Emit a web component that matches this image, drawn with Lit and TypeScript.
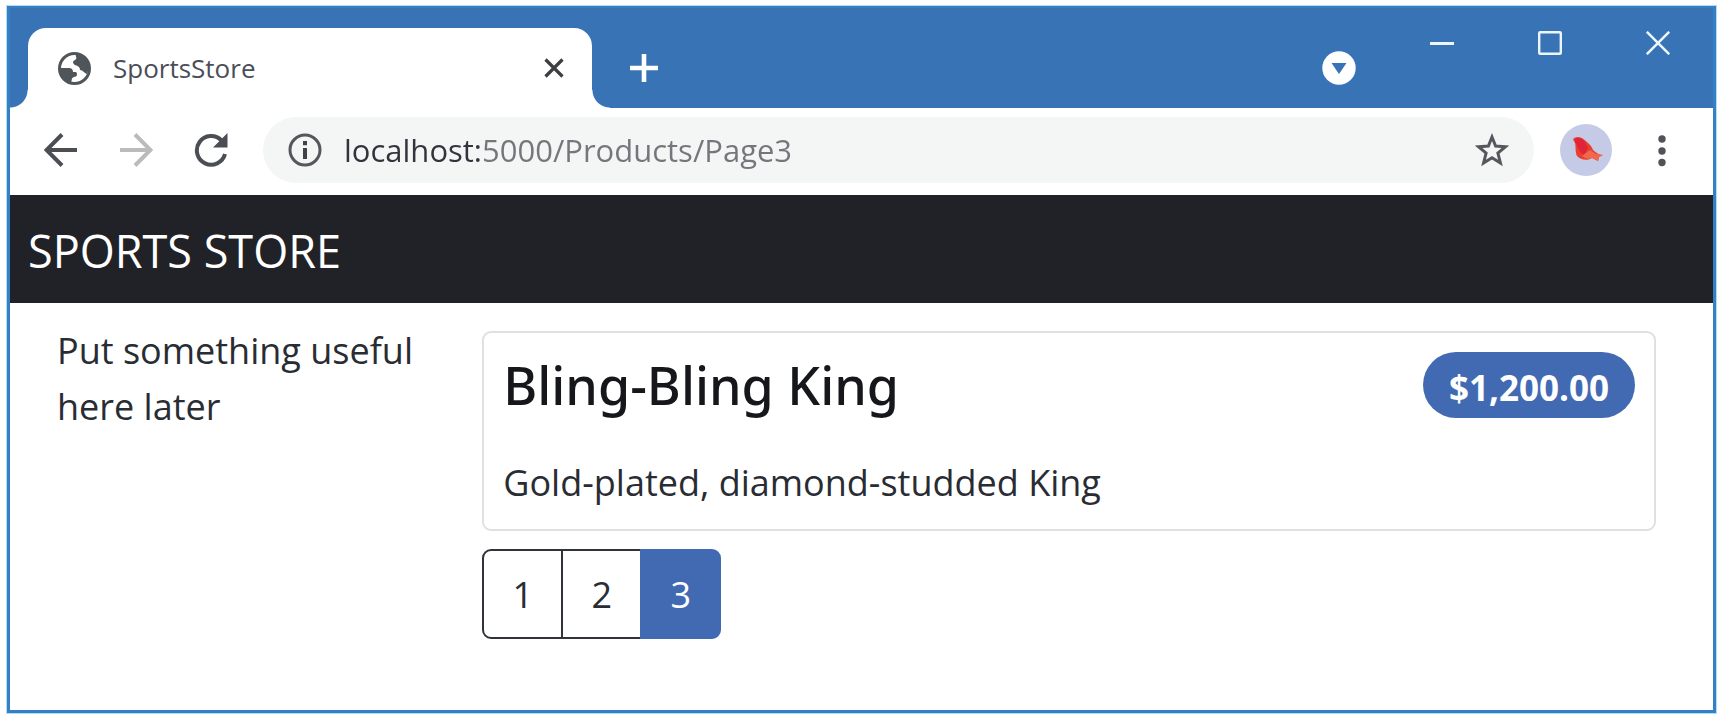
import { LitElement, html, css, svg } from "lit";
import { customElement, state } from "lit/decorators.js";

interface Product {
  name: string;
  description: string;
  price: number;
}

const money = new Intl.NumberFormat("en-US", { style: "currency", currency: "USD" });

const icons = {
  globe: svg`<svg viewBox="0 0 33 33" width="33" height="33" aria-hidden="true">
    <circle cx="16.5" cy="16.5" r="15" fill="#fff" stroke="#50555a" stroke-width="3"/>
    <path fill="#50555a" d="M18 2 C17 5 20 6 17 8 C14 9 15 12 17 13 C20 14 22 15 22 18 C25 18 26 21 29 22 C33 14 29 3 18 2Z"/>
    <path fill="#50555a" d="M2 16 H11 C14 16 15 18 15 20 H18 C20 22 19 25 16 25 C13 26 14 29 13 31 C6 29 2 24 2 16Z"/>
  </svg>`,
  tabClose: svg`<svg viewBox="0 0 20 20" width="20" height="20" aria-hidden="true">
    <path d="M1.500 1.500 18.500 18.500M18.500 1.500 1.500 18.500" stroke="#3c4043" stroke-width="3.200"/></svg>`,
  plus: svg`<svg viewBox="0 0 28 28" width="28" height="28" aria-hidden="true">
    <path d="M14 0V28M0 14H28" stroke="#fff" stroke-width="4.600"/></svg>`,
  drop: svg`<svg viewBox="0 0 34 34" width="34" height="34" aria-hidden="true">
    <circle cx="17" cy="17" r="16.700" fill="#fff"/><path d="M9.500 12H24.500L17 23Z" fill="#3873b6"/></svg>`,
  minimize: svg`<svg viewBox="0 0 24 24" width="24" height="24" aria-hidden="true">
    <path d="M0 12.500H24" stroke="#eef6fd" stroke-width="3"/></svg>`,
  maximize: svg`<svg viewBox="0 0 24 24" width="24" height="24" aria-hidden="true">
    <rect x="1.200" y="1.200" width="21.600" height="21.600" rx="1" fill="none" stroke="#eef6fd" stroke-width="2.400"/></svg>`,
  close: svg`<svg viewBox="0 0 24 24" width="24" height="24" aria-hidden="true">
    <path d="M.8.8 23.200 23.200M23.200.8.8 23.200" stroke="#eef6fd" stroke-width="2.500"/></svg>`,
  back: svg`<svg viewBox="0 0 34 34" width="34" height="34" aria-hidden="true">
    <path d="M33 17H3.500M18 1.500 2.500 17 18 32.500" fill="none" stroke="#4b4f54" stroke-width="4"/></svg>`,
  forward: svg`<svg viewBox="0 0 34 34" width="34" height="34" aria-hidden="true">
    <path d="M1 17H30.500M16 1.500 31.500 17 16 32.500" fill="none" stroke="#b9bbbd" stroke-width="4"/></svg>`,
  reload: svg`<svg viewBox="0 0 34 34" width="34" height="34" aria-hidden="true">
    <path d="M27.500 7.500A14.300 14.300 0 1 0 31 21" fill="none" stroke="#4b4f54" stroke-width="4"/>
    <path d="M33.500 0V14.500H19Z" fill="#4b4f54"/></svg>`,
  info: svg`<svg viewBox="0 0 34 34" width="34" height="34" aria-hidden="true">
    <circle cx="17" cy="17" r="15" fill="none" stroke="#54585c" stroke-width="3"/>
    <path d="M17 8V12.200M17 15V26" stroke="#3f4347" stroke-width="4"/></svg>`,
  star: svg`<svg viewBox="0 0 34 34" width="34" height="34" aria-hidden="true">
    <path d="M17 4 20.600 13 30.500 13.700 22.900 20 25.400 30 17 24.700 8.600 30 11.100 20 3.500 13.700 13.400 13Z" fill="none" stroke="#54585c" stroke-width="3"/></svg>`,
  bird: svg`<svg viewBox="0 0 52 52" width="52" height="52" aria-hidden="true">
    <circle cx="26" cy="26" r="26" fill="#c5cbe7"/>
    <path d="M13 15.500C14 12 21 12 24 15.500C28 19 32 22 33 26C36 29 40 31 43 31L39 33L38 37L32 34C28 37 20 36 17 32C15 28 16 22 15 19Z" fill="#e8402f"/>
    <path d="M15 15C18 13 22 14 25 18L28 24L24 31C18 28 18 21 15 18Z" fill="#e0243a"/>
    <path d="M22 32L30 26L36 30L43 31L39 33L38 37L32 34Q27 36 22 32Z" fill="#f0684e"/></svg>`,
  dots: svg`<svg viewBox="0 0 10 34" width="10" height="34" aria-hidden="true">
    <g fill="#505357"><circle cx="5" cy="6" r="3.700"/><circle cx="5" cy="18" r="3.700"/><circle cx="5" cy="29.500" r="3.700"/></g></svg>`,
};

@customElement("browser-chrome")
export class BrowserChrome extends LitElement {
  static styles = css`
    :host { display: block; font-family: "Open Sans", "Noto Sans", sans-serif; }
    button {
      display: flex; padding: 0; border: 0; background: none; color: inherit; flex: none;
    }
    svg { display: block; }
    .strip { display: flex; background: #3873b6; height: 100px; }
    .curve { flex: none; align-self: flex-end; width: 18px; height: 18px; }
    .curve-start { background: radial-gradient(circle at 0 0, transparent 17px, #fff 18px); }
    .curve-end { background: radial-gradient(circle at 100% 0, transparent 17px, #fff 18px); }
    .tab {
      display: flex; align-items: center; gap: 22px; flex: 0 1 564px; min-width: 0;
      box-sizing: border-box; margin-top: 20px; padding: 0 28px 0 30px;
      background: #fff; border-radius: 18px 18px 0 0;
    }
    .tab-title { flex: 1; font-size: 26px; line-height: 36px; color: #4a4e58; }
    .new-tab { align-self: center; margin: 20px 0 0 20px; }
    .actions { display: flex; margin-left: auto; padding-right: 43px; }
    .search-tabs { align-self: center; margin: 20px 74px 0 0; }
    .window-buttons { display: flex; gap: 84px; padding-top: 23px; }
    .toolbar {
      display: flex; align-items: center; box-sizing: border-box;
      height: 87px; padding: 0 46px 3px 34px; background: #fff;
    }
    .nav { display: flex; gap: 41px; margin-right: 35px; }
    .address {
      display: flex; align-items: center; flex: 1; min-width: 0; gap: 22px;
      height: 66px; box-sizing: border-box; padding: 0 25px; border-radius: 33px; background: #f4f5f5;
    }
    .url {
      flex: 1; min-width: 0; padding: 0; border: 0; outline: 0; height: 48px;
      font: 31px/48px "Open Sans", "Noto Sans", sans-serif;
      color: transparent;
      background: linear-gradient(90deg, #30343c 136px, #73767b 136px);
      -webkit-background-clip: text; background-clip: text;
    }
    .avatar { margin: 0 45px 0 26px; }
  `;

  render() {
    return html`
      <div class="strip">
        <span class="curve curve-start"></span>
        <div class="tab">
          ${icons.globe}
          <span class="tab-title">SportsStore</span>
          <button aria-label="Close tab">${icons.tabClose}</button>
        </div>
        <span class="curve curve-end"></span>
        <button class="new-tab" aria-label="New tab">${icons.plus}</button>
        <div class="actions">
          <button class="search-tabs" aria-label="Search tabs">${icons.drop}</button>
          <div class="window-buttons">
            <button aria-label="Minimize">${icons.minimize}</button>
            <button aria-label="Maximize">${icons.maximize}</button>
            <button aria-label="Close">${icons.close}</button>
          </div>
        </div>
      </div>
      <div class="toolbar">
        <div class="nav">
          <button aria-label="Back">${icons.back}</button>
          <button aria-label="Forward">${icons.forward}</button>
          <button aria-label="Reload">${icons.reload}</button>
        </div>
        <div class="address">
          <button aria-label="Site information">${icons.info}</button>
          <input class="url" type="text" aria-label="Address" value="localhost:5000/Products/Page3" />
          <button aria-label="Bookmark this page">${icons.star}</button>
        </div>
        <button class="avatar" aria-label="Profile">${icons.bird}</button>
        <button aria-label="Menu">${icons.dots}</button>
      </div>
    `;
  }
}

@customElement("product-card")
export class ProductCard extends LitElement {
  static properties = { product: { attribute: false } };
  declare product: Product;

  static styles = css`
    :host {
      display: block; box-sizing: border-box; padding: 19px 19px 18px;
      border: 2px solid #e0e0e0; border-radius: 9px;
    }
    .head { display: flex; justify-content: space-between; align-items: flex-start; }
    .name {
      margin: 0; font-family: "Noto Sans", "Open Sans", sans-serif;
      font-size: 52px; line-height: 66px; font-weight: 500; color: #15171b;
    }
    .price {
      padding: 6px 26px 0; border-radius: 33px; background: #426ab3; color: #fff;
      font-size: 35px; line-height: 60px; font-weight: 700;
    }
    .description { margin: 0; padding: 37px 0 0; font-size: 36px; line-height: 56px; }
  `;

  render() {
    return html`
      <div class="head">
        <h4 class="name">${this.product.name}</h4>
        <span class="price">${money.format(this.product.price)}</span>
      </div>
      <p class="description">${this.product.description}</p>
    `;
  }
}

@customElement("app-root")
export class AppRoot extends LitElement {
  @state() private products: Product[] = [
    { name: "Bling-Bling King", description: "Gold-plated, diamond-studded King", price: 1200 },
  ];
  @state() private pages = [1, 2, 3];
  @state() private current = 3;

  static styles = css`
    :host {
      display: flex; box-sizing: border-box; min-height: 100vh; padding: 6px 6px 6px 7px;
      background: #fff; color: #292d33;
      font-family: "Open Sans", "Noto Sans", sans-serif; font-size: 36px; line-height: 56px;
    }
    .window {
      flex: 1; min-width: 0; border: 3px solid #3580c4; border-top-width: 2px;
      box-shadow: 0 0 0 1px #b5dcf5;
    }
    .brand {
      display: flex; align-items: center; box-sizing: border-box; height: 108px; padding: 4px 18px 0;
      background: #202227; color: #fff; font-size: 45px;
    }
    .content {
      display: grid; grid-template-columns: minmax(0, 1fr) minmax(0, 3fr); column-gap: 34px;
      padding: 28px 57px 0 47px;
    }
    .sidebar { margin-top: -8px; }
    .pages { display: flex; margin-top: 18px; }
    .page {
      display: flex; align-items: center; justify-content: center; box-sizing: border-box;
      width: 81px; height: 90px; padding-top: 2px; border: 2px solid #303338; color: #292d33; text-decoration: none;
    }
    .page + .page { margin-left: -2px; }
    .page:first-child { border-radius: 9px 0 0 9px; }
    .page:last-child { border-radius: 0 9px 9px 0; }
    .selected { background: #426ab3; border-color: #426ab3; color: #fff; }
  `;

  render() {
    return html`
      <div class="window">
        <browser-chrome></browser-chrome>
        <header class="brand">SPORTS STORE</header>
        <div class="content">
          <aside class="sidebar">Put something useful here later</aside>
          <main>
            ${this.products.map((p) => html`<product-card .product=${p}></product-card>`)}
            <nav class="pages" aria-label="Pages">
              ${this.pages.map(
                (n) => html`<a class="page ${n === this.current ? "selected" : ""}" href="#Page${n}">${n}</a>`
              )}
            </nav>
          </main>
        </div>
      </div>
    `;
  }
}
